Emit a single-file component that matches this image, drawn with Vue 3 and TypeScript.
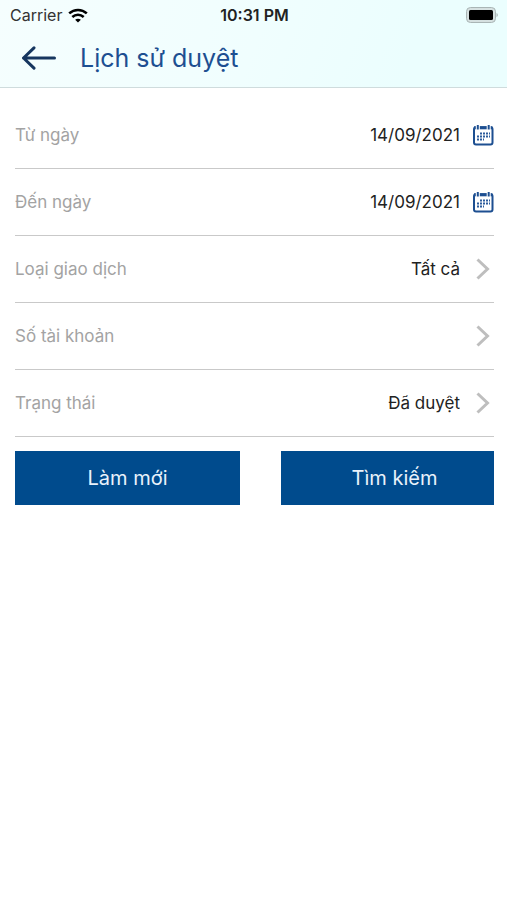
<script setup lang="ts">
import { reactive } from 'vue'

interface DateField {
  id: 'from' | 'to'
  label: string
}

interface ChoiceField {
  id: 'type' | 'account' | 'status'
  label: string
  options: string[]
}

const dateFields: DateField[] = [
  { id: 'from', label: 'Từ ngày' },
  { id: 'to', label: 'Đến ngày' },
]

const choiceFields: ChoiceField[] = [
  { id: 'type', label: 'Loại giao dịch', options: ['Tất cả'] },
  { id: 'account', label: 'Số tài khoản', options: [''] },
  { id: 'status', label: 'Trạng thái', options: ['Đã duyệt'] },
]

const initial = {
  from: '14/09/2021',
  to: '14/09/2021',
  type: 'Tất cả',
  account: '',
  status: 'Đã duyệt',
}

const form = reactive({ ...initial })

function reset(): void {
  Object.assign(form, initial)
}
</script>

<template>
  <div class="screen">
    <header class="top">
      <div class="status-bar">
        <div class="carrier">
          <span>Carrier</span>
          <svg class="wifi" viewBox="0 0 20 15" aria-hidden="true">
            <path d="M1.2 5.4C6.2 .8 13.8 .8 18.8 5.4" />
            <path d="M4.3 8.9C7.6 6 12.4 6 15.7 8.9" />
            <path class="dot" d="M7.1 11.7C8.7 10.4 11.3 10.4 12.9 11.7L10 14.6Z" />
          </svg>
        </div>
        <time class="clock">10:31 PM</time>
        <svg class="battery" viewBox="0 0 34 18" aria-hidden="true">
          <rect class="shell" x="1.5" y="1.5" width="29" height="15" rx="4" />
          <rect x="4" y="4" width="24" height="10" rx="1.5" />
          <path class="cap" d="M31.5 7C33.3 7.8 33.3 10.2 31.5 11Z" />
        </svg>
      </div>
      <div class="title-bar">
        <button class="back" type="button">
          <svg viewBox="0 0 36 24" aria-hidden="true">
            <path d="M12 1.8L1.5 12L12 22.2M1.5 12H32.5" />
          </svg>
        </button>
        <h1>Lịch sử duyệt</h1>
      </div>
    </header>

    <form class="filters" @submit.prevent>
      <div v-for="field in dateFields" :key="field.id" class="row">
        <label :for="field.id">{{ field.label }}</label>
        <input :id="field.id" v-model="form[field.id]" class="value" type="text" />
        <svg class="calendar" viewBox="0 0 22 22" aria-hidden="true">
          <rect class="frame" x="2" y="3.2" width="18.5" height="17.3" rx="2" />
          <path class="band" d="M2 3.8H20.5" />
          <path class="gaps" d="M5.8 1V6M16.7 1V6" />
          <path class="rings" d="M5.8 1V5.5M16.7 1V5.5" />
          <path class="days" d="M8 9.5H18M5 12.5H18M5 15.5H12" />
        </svg>
      </div>
      <div v-for="field in choiceFields" :key="field.id" class="row">
        <label :for="field.id">{{ field.label }}</label>
        <select :id="field.id" v-model="form[field.id]" class="value">
          <option v-for="option in field.options" :key="option" :value="option">{{ option }}</option>
        </select>
        <svg class="chevron" viewBox="0 0 22 22" aria-hidden="true">
          <path d="M5.5 1.5L15.5 11L5.5 20.5" />
        </svg>
      </div>
      <div class="actions">
        <button type="button" @click="reset">Làm mới</button>
        <button class="search" type="submit">Tìm kiếm</button>
      </div>
    </form>
  </div>
</template>

<style>
body {
  background: #fff;
}
</style>

<style scoped>
.screen {
  font-family: Inter, "Liberation Sans", sans-serif;
  color: #222;
}

.top {
  background: linear-gradient(110deg, #f5fefe 0%, #f0fefe 50%, #ebfefe 80%);
  border-bottom: 1px solid #cfdcdd;
}

.status-bar {
  display: grid;
  grid-template-columns: 1fr auto 1fr;
  align-items: center;
  height: 30px;
  padding: 0 8px 0 10px;
  font-size: 16px;
}

.carrier {
  display: flex;
  align-items: center;
  gap: 6px;
  color: #333;
}

.wifi {
  width: 20px;
  height: 15px;
  fill: none;
  stroke: #000;
  stroke-width: 2.6;
}

.wifi .dot {
  fill: #000;
  stroke: none;
}

.clock {
  font-weight: 600;
}

.battery {
  justify-self: end;
  width: 34px;
  height: 18px;
}

.battery .shell {
  fill: #d5e0e0;
  stroke: #a9b5b5;
}

.battery .cap {
  fill: #a9b5b5;
}

.title-bar {
  display: flex;
  align-items: center;
  gap: 22px;
  height: 57px;
  padding: 0 22px 2px;
  box-sizing: border-box;
}

button {
  font-family: inherit;
  border: 0;
  padding: 0;
  cursor: pointer;
}

.back {
  display: flex;
  background: none;
}

.back svg {
  width: 36px;
  height: 24px;
  fill: none;
  stroke: #16365f;
  stroke-width: 3;
  stroke-linecap: round;
  stroke-linejoin: round;
}

h1 {
  margin: 0;
  font-size: 25px;
  font-weight: 400;
  line-height: 32px;
  color: #1d4f91;
}

.filters {
  padding: 14px 13px 14px 15px;
}

.row {
  display: flex;
  align-items: center;
  height: 67px;
  box-sizing: border-box;
  border-bottom: 1px solid #c9c9c9;
  font-size: 17px;
}

label {
  flex: none;
  color: #a3a3a3;
}

.value {
  flex: 1;
  min-width: 0;
  height: 40px;
  margin: 0 12px 0 0;
  padding: 0;
  border: 0;
  appearance: none;
  background: none;
  font: inherit;
  color: #222;
  text-align: right;
  text-align-last: right;
}

.calendar,
.chevron {
  flex: none;
  width: 22px;
  height: 22px;
  fill: none;
}

.calendar .frame {
  stroke: #1d4f91;
  stroke-width: 2;
}

.calendar .band {
  stroke: #1d4f91;
  stroke-width: 3;
}

.calendar .gaps {
  stroke: #fff;
  stroke-width: 4;
}

.calendar .rings {
  stroke: #1d4f91;
  stroke-width: 2;
}

.calendar .days {
  stroke: #2d5c9c;
  stroke-width: 2;
  stroke-dasharray: 2 1;
}

.chevron path {
  stroke: #bebebe;
  stroke-width: 3;
}

.actions {
  display: grid;
  grid-template-columns: 225fr 213fr;
  gap: 41px;
  padding-top: 14px;
}

.actions button {
  height: 54px;
  background: #004b8d;
  color: #e9f2fb;
  font-size: 20px;
}

.actions .search {
  padding-left: 14px;
}
</style>
